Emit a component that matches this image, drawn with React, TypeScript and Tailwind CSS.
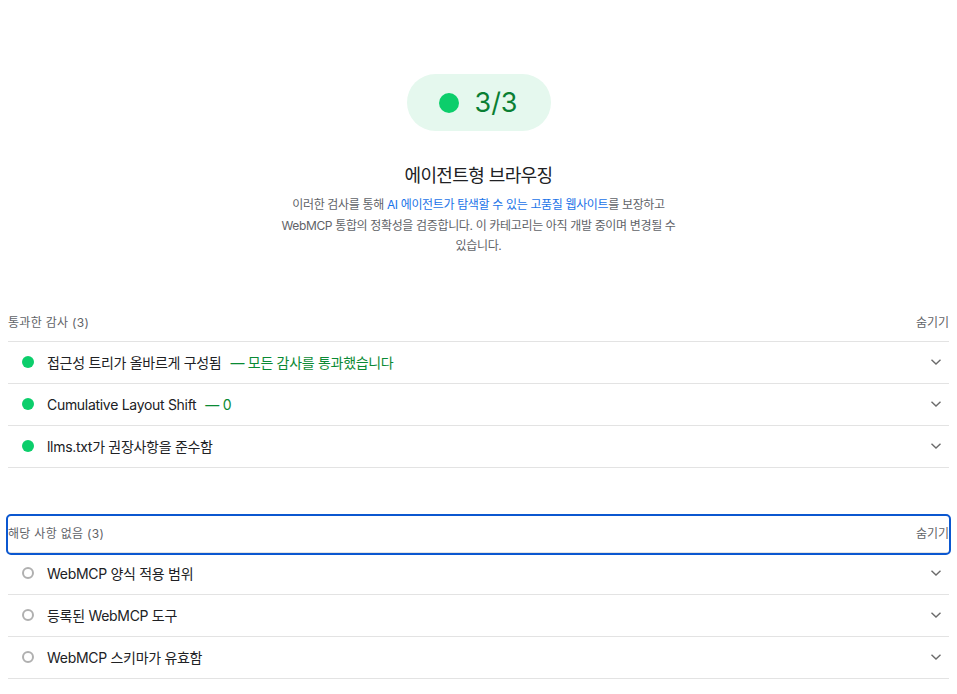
const font = {
  fontFamily: 'Inter, "Noto Sans CJK KR", "Noto Sans", sans-serif',
};

type Audit = { title: string; display?: string };

const passed: Audit[] = [
  { title: "접근성 트리가 올바르게 구성됨", display: "모든 감사를 통과했습니다" },
  { title: "Cumulative Layout Shift", display: "0" },
  { title: "llms.txt가 권장사항을 준수함" },
];

const notApplicable: Audit[] = [
  { title: "WebMCP 양식 적용 범위" },
  { title: "등록된 WebMCP 도구" },
  { title: "WebMCP 스키마가 유효함" },
];

const Chevron = () => (
  <svg width="12" height="8" viewBox="0 0 12 8" className="shrink-0">
    <path d="M1.5 1.8 L6 6 L10.5 1.8" fill="none" stroke="#6b6b6b" strokeWidth="1.4" />
  </svg>
);

const AuditRow = ({ audit, pass }: { audit: Audit; pass: boolean }) => (
  <div className="flex h-[42px] items-center border-b border-[#e3e3e3] pl-[14px] pr-[8px]">
    {pass ? (
      <span className="h-[12px] w-[12px] shrink-0 rounded-full bg-[#0cce6b]" />
    ) : (
      <span className="h-[12px] w-[12px] shrink-0 rounded-full border-2 border-[#b0b0b0]" />
    )}
    <span className="ml-[13px] text-[14px] tracking-[-0.3px] text-[#202124]">{audit.title}</span>
    {audit.display && (
      <span className="ml-[9px] text-[14px] tracking-[-0.3px] text-[#0a8a34]">— {audit.display}</span>
    )}
    <span className="ml-auto mr-[-1px]">
      <Chevron />
    </span>
  </div>
);

const Group = ({
  label,
  audits,
  pass,
  focused,
}: {
  label: string;
  audits: Audit[];
  pass: boolean;
  focused?: boolean;
}) => (
  <div>
    <div
      className={
        focused
          ? "flex h-[37px] items-center justify-between rounded-[3px] border-b border-[#e3e3e3] text-[12px] text-[#5f6368] outline-2 outline-[#0b57d0] outline-offset-0"
          : "flex h-[37px] items-center justify-between border-b border-[#e3e3e3] text-[12px] text-[#5f6368]"
      }
    >
      <span className="tracking-[0.3px]">{label}</span>
      <span>숨기기</span>
    </div>
    {audits.map((a) => (
      <AuditRow key={a.title} audit={a} pass={pass} />
    ))}
  </div>
);

export default function App() {
  return (
    <div className="min-h-[694px] w-full bg-white px-[8px] pt-[74px]" style={font}>
      <div className="flex flex-col items-center">
        <div className="flex h-[57px] w-[144px] items-center justify-center gap-[15px] rounded-full bg-[#e5f8ee]">
          <span className="h-[20px] w-[20px] rounded-full bg-[#0cce6b]" />
          <span className="text-[27px] leading-none text-[#0a7f33]">3/3</span>
        </div>
        <h2 className="mt-[33px] text-[18px] leading-[24px] tracking-[-0.6px] text-[#202124]">
          에이전트형 브라우징
        </h2>
        <p className="mt-[7px] w-[401px] text-center text-[12px] leading-[20.5px] tracking-[-0.35px] text-[#5f6368]">
          이러한 검사를 통해{" "}
          <span className="text-[#1a73e8]">AI 에이전트가 탐색할 수 있는 고품질 웹사이트</span>를
          보장하고 WebMCP 통합의 정확성을 검증합니다. 이 카테고리는 아직 개발 중이며 변경될 수
          있습니다.
        </p>
      </div>
      <div className="mt-[48px]">
        <Group label="통과한 감사 (3)" audits={passed} pass />
      </div>
      <div className="mt-[48px]">
        <Group label="해당 사항 없음 (3)" audits={notApplicable} pass={false} focused />
      </div>
    </div>
  );
}
